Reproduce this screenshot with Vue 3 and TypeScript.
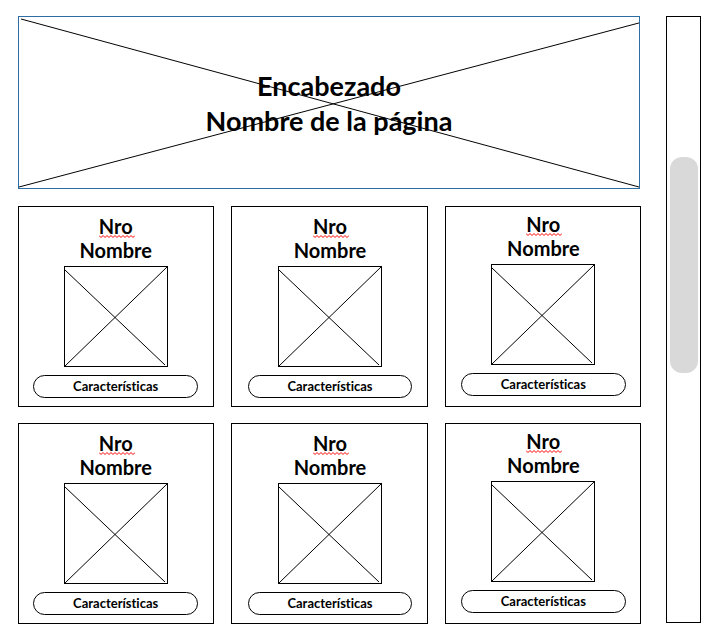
<script setup lang="ts">
interface Item {
  id: number
  number: string
  name: string
  action: string
}

const title: string[] = ['Encabezado', 'Nombre de la página']

const items: Item[] = Array.from({ length: 6 }, (_, i) => ({
  id: i + 1,
  number: 'Nro',
  name: 'Nombre',
  action: 'Características',
}))
</script>

<template>
  <div class="page">
    <main class="content">
      <header class="banner">
        <h1 class="banner-title">
          <span v-for="line in title" :key="line" class="banner-line">{{ line }}</span>
        </h1>
        <svg class="banner-cross" viewBox="0 0 622 172" preserveAspectRatio="none" aria-hidden="true">
          <line x1="2" y1="2" x2="622" y2="171" />
          <line x1="0" y1="171" x2="622" y2="6" />
        </svg>
      </header>

      <section class="cards">
        <article v-for="item in items" :key="item.id" class="card">
          <h2 class="card-title">
            <span class="card-number">
              {{ item.number }}
              <svg class="squiggle" viewBox="0 0 36 3" aria-hidden="true">
                <path d="M0 .5L2 2.5L4 .5L6 2.5L8 .5L10 2.5L12 .5L14 2.5L16 .5L18 2.5L20 .5L22 2.5L24 .5L26 2.5L28 .5L30 2.5L32 .5L34 2.5L36 .5" />
              </svg>
            </span>
            <span class="card-name">{{ item.name }}</span>
          </h2>
          <svg class="picture" viewBox="0 0 104 101" preserveAspectRatio="none" aria-hidden="true">
            <line x1="1" y1="4" x2="101" y2="99" />
            <line x1="1" y1="100" x2="103" y2="1" />
            <rect x="0.5" y="0.5" width="103" height="100" />
          </svg>
          <button type="button" class="pill">{{ item.action }}</button>
        </article>
      </section>
    </main>

    <aside class="track">
      <div class="thumb"></div>
    </aside>
  </div>
</template>

<style>
body {
  margin: 0;
  background: #fff;
}
</style>

<style scoped>
.page {
  display: flex;
  gap: 25px;
  padding: 16px 18px 18px;
  box-sizing: border-box;
  font-family: Lato, "Liberation Sans", sans-serif;
  font-weight: 700;
  font-variant-ligatures: none;
  color: #000;
}

.content {
  flex: 1;
  min-width: 0;
  display: flex;
  flex-direction: column;
  gap: 17px;
}

.banner {
  position: relative;
  margin-right: 1px;
  padding: 51px 0 50px;
  border: 1px solid #2e6da4;
}

.banner-title {
  margin: 0;
  font-size: 27px;
  line-height: 35px;
  text-align: center;
}

.banner-line {
  display: block;
}

.banner-cross {
  position: absolute;
  inset: 0;
  width: 100%;
  height: 100%;
}

.banner-cross line,
.picture line,
.picture rect {
  fill: none;
  stroke: #000;
  stroke-width: 1;
}

.cards {
  display: grid;
  grid-template-columns: repeat(3, 1fr);
  gap: 16px 17px;
}

.card {
  display: flex;
  flex-direction: column;
  align-items: center;
  padding: 7px 15px 8px 14px;
  border: 1px solid #000;
}

.card:nth-child(3n + 2) {
  padding-left: 16px;
}

.card:nth-child(3n) {
  padding: 5px 14px 8px 15px;
}

.card-title {
  margin: 0 0 4px;
  display: flex;
  flex-direction: column;
  align-items: center;
  font-size: 20px;
  line-height: 24px;
}

.card-number {
  position: relative;
}

.squiggle {
  position: absolute;
  left: 0;
  bottom: 0;
  width: 36px;
  height: 3px;
}

.squiggle path {
  fill: none;
  stroke: #f00;
  stroke-width: 1;
}

.picture {
  width: 104px;
  height: 101px;
  margin-bottom: 8px;
}

.pill {
  width: 100%;
  height: 23px;
  padding: 0;
  border: 1px solid #000;
  border-radius: 12px;
  background: #fff;
  color: #000;
  font: inherit;
  font-size: 13px;
  font-variant-ligatures: none;
  line-height: 21px;
}

.track {
  display: flex;
  flex-direction: column;
  width: 28px;
  margin-bottom: 1px;
  padding: 0 2px 0 3px;
  border: 1px solid #000;
}

.track::before {
  content: "";
  flex: 140;
}

.thumb {
  flex: 216;
  border-radius: 12px;
  background: #d9d9d9;
}

.track::after {
  content: "";
  flex: 249;
}
</style>
